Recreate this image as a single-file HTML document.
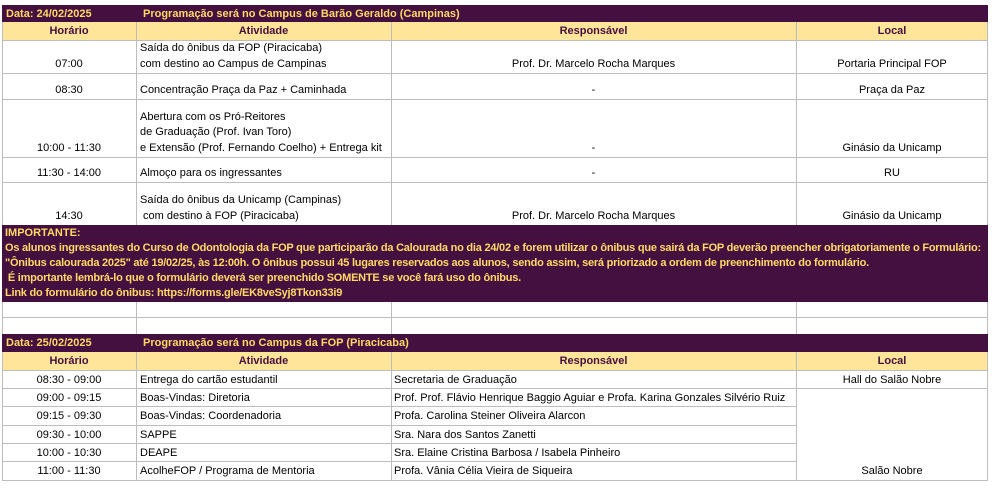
<!DOCTYPE html>
<html><head><meta charset="utf-8"><style>
*{margin:0;padding:0;box-sizing:border-box}
body{width:997px;height:493px;background:#fff;position:relative;overflow:hidden;font-family:"Liberation Sans",sans-serif;font-size:11px;letter-spacing:0px;color:#000}
div{position:absolute;white-space:nowrap}
.p{background:#43103f}
.y{background:#ffe599}
.hl{height:1px;background:#bdbdbd}
.vl{width:1px;background:#bdbdbd}
.yt{color:#ffd966;font-weight:bold}
.ht{color:#43103f;font-weight:bold}
.c{text-align:center}
</style></head><body>
<!-- table 1 -->
<div class="p" style="left:2px;top:5px;width:986px;height:17px"></div>
<div class="yt" style="left:6px;top:8px">Data: 24/02/2025</div>
<div class="yt" style="left:143px;top:8px">Programação será no Campus de Barão Geraldo (Campinas)</div>
<div class="y" style="left:2px;top:22px;width:986px;height:18px"></div>
<div class="ht c" style="left:2px;top:25px;width:134px">Horário</div>
<div class="ht c" style="left:136px;top:25px;width:255px">Atividade</div>
<div class="ht c" style="left:391px;top:25px;width:405px">Responsável</div>
<div class="ht c" style="left:796px;top:25px;width:192px">Local</div>
<div class="vl" style="left:2px;top:22px;height:204px"></div>
<div class="vl" style="left:136px;top:22px;height:204px"></div>
<div class="vl" style="left:391px;top:22px;height:204px"></div>
<div class="vl" style="left:796px;top:22px;height:204px"></div>
<div class="vl" style="left:987px;top:22px;height:204px"></div>
<div class="hl" style="left:2px;top:40px;width:986px"></div>
<div class="hl" style="left:2px;top:73px;width:986px"></div>
<div class="hl" style="left:2px;top:99px;width:986px"></div>
<div class="hl" style="left:2px;top:157px;width:986px"></div>
<div class="hl" style="left:2px;top:182px;width:986px"></div>
<div class="hl" style="left:2px;top:301px;width:986px"></div>
<div class="hl" style="left:2px;top:317px;width:986px"></div>
<div class="vl" style="left:2px;top:302px;height:32px"></div>
<div class="vl" style="left:136px;top:302px;height:32px"></div>
<div class="vl" style="left:391px;top:302px;height:32px"></div>
<div class="vl" style="left:796px;top:302px;height:32px"></div>
<div class="vl" style="left:987px;top:302px;height:32px"></div>

<div class="c" style="left:2px;top:58px;width:134px">07:00</div>
<div style="left:140px;top:42px">Saída do ônibus da FOP (Piracicaba)</div>
<div style="left:140px;top:58px">com destino ao Campus de Campinas</div>
<div class="c" style="left:391px;top:58px;width:405px">Prof. Dr. Marcelo Rocha Marques</div>
<div class="c" style="left:796px;top:58px;width:192px">Portaria Principal FOP</div>

<div class="c" style="left:2px;top:84px;width:134px">08:30</div>
<div style="left:140px;top:84px">Concentração Praça da Paz + Caminhada</div>
<div class="c" style="left:391px;top:84px;width:405px">-</div>
<div class="c" style="left:796px;top:84px;width:192px">Praça da Paz</div>

<div style="left:140px;top:111px">Abertura com os Pró-Reitores</div>
<div style="left:140px;top:126px">de Graduação (Prof. Ivan Toro)</div>
<div style="left:140px;top:142px">e Extensão (Prof. Fernando Coelho) + Entrega kit</div>
<div class="c" style="left:2px;top:142px;width:134px">10:00 - 11:30</div>
<div class="c" style="left:391px;top:142px;width:405px">-</div>
<div class="c" style="left:796px;top:142px;width:192px">Ginásio da Unicamp</div>

<div class="c" style="left:2px;top:167px;width:134px">11:30 - 14:00</div>
<div style="left:140px;top:167px">Almoço para os ingressantes</div>
<div class="c" style="left:391px;top:167px;width:405px">-</div>
<div class="c" style="left:796px;top:167px;width:192px">RU</div>

<div style="left:140px;top:194px">Saída do ônibus da Unicamp (Campinas)</div>
<div style="left:140px;top:210px">&nbsp;com destino à FOP (Piracicaba)</div>
<div class="c" style="left:2px;top:210px;width:134px">14:30</div>
<div class="c" style="left:391px;top:210px;width:405px">Prof. Dr. Marcelo Rocha Marques</div>
<div class="c" style="left:796px;top:210px;width:192px">Ginásio da Unicamp</div>

<div class="p" style="left:2px;top:225px;width:986px;height:77px"></div>
<div class="yt" style="left:5px;top:227px">IMPORTANTE:</div>
<div class="yt" style="left:5px;top:242px;letter-spacing:-0.23px">Os alunos ingressantes do Curso de Odontologia da FOP que participarão da Calourada no dia 24/02 e forem utilizar o ônibus que sairá da FOP deverão preencher obrigatoriamente o Formulário:</div>
<div class="yt" style="left:5px;top:257px;letter-spacing:-0.23px">"Ônibus calourada 2025" até 19/02/25, às 12:00h. O ônibus possui 45 lugares reservados aos alunos, sendo assim, será priorizado a ordem de preenchimento do formulário.</div>
<div class="yt" style="left:5px;top:272px;letter-spacing:-0.23px">&nbsp;É importante lembrá-lo que o formulário deverá ser preenchido SOMENTE se você fará uso do ônibus.</div>
<div class="yt" style="left:5px;top:287px;letter-spacing:-0.23px">Link do formulário do ônibus: https://forms.gle/EK8veSyj8Tkon33i9</div>

<!-- table 2 -->
<div class="p" style="left:2px;top:334px;width:986px;height:18px"></div>
<div class="yt" style="left:6px;top:337px">Data: 25/02/2025</div>
<div class="yt" style="left:143px;top:337px">Programação será no Campus da FOP (Piracicaba)</div>
<div class="y" style="left:2px;top:352px;width:986px;height:18px"></div>
<div class="ht c" style="left:2px;top:355px;width:134px">Horário</div>
<div class="ht c" style="left:136px;top:355px;width:255px">Atividade</div>
<div class="ht c" style="left:391px;top:355px;width:405px">Responsável</div>
<div class="ht c" style="left:796px;top:355px;width:192px">Local</div>
<div class="vl" style="left:2px;top:352px;height:129px"></div>
<div class="vl" style="left:136px;top:352px;height:129px"></div>
<div class="vl" style="left:391px;top:352px;height:129px"></div>
<div class="vl" style="left:796px;top:352px;height:129px"></div>
<div class="vl" style="left:987px;top:352px;height:129px"></div>
<div class="hl" style="left:2px;top:370px;width:986px"></div>
<div class="hl" style="left:2px;top:388px;width:986px"></div>
<div class="hl" style="left:2px;top:406px;width:794px"></div>
<div class="hl" style="left:2px;top:425px;width:794px"></div>
<div class="hl" style="left:2px;top:443px;width:794px"></div>
<div class="hl" style="left:2px;top:461px;width:794px"></div>
<div class="hl" style="left:2px;top:480px;width:986px"></div>

<div class="c" style="left:2px;top:374px;width:134px">08:30 - 09:00</div>
<div style="left:140px;top:374px">Entrega do cartão estudantil</div>
<div style="left:394px;top:374px">Secretaria de Graduação</div>
<div class="c" style="left:796px;top:374px;width:192px">Hall do Salão Nobre</div>
<div class="c" style="left:2px;top:392px;width:134px">09:00 - 09:15</div>
<div style="left:140px;top:392px">Boas-Vindas: Diretoria</div>
<div style="left:394px;top:392px">Prof. Prof. Flávio Henrique Baggio Aguiar e Profa. Karina Gonzales Silvério Ruiz</div>
<div class="c" style="left:2px;top:410px;width:134px">09:15 - 09:30</div>
<div style="left:140px;top:410px">Boas-Vindas: Coordenadoria</div>
<div style="left:394px;top:410px">Profa. Carolina Steiner Oliveira Alarcon</div>
<div class="c" style="left:2px;top:429px;width:134px">09:30 - 10:00</div>
<div style="left:140px;top:429px">SAPPE</div>
<div style="left:394px;top:429px">Sra. Nara dos Santos Zanetti</div>
<div class="c" style="left:2px;top:447px;width:134px">10:00 - 10:30</div>
<div style="left:140px;top:447px">DEAPE</div>
<div style="left:394px;top:447px">Sra. Elaine Cristina Barbosa / Isabela Pinheiro</div>
<div class="c" style="left:2px;top:465px;width:134px">11:00 - 11:30</div>
<div style="left:140px;top:465px">AcolheFOP / Programa de Mentoria</div>
<div style="left:394px;top:465px">Profa. Vânia Célia Vieira de Siqueira</div>
<div class="c" style="left:796px;top:465px;width:192px">Salão Nobre</div>
</body></html>
